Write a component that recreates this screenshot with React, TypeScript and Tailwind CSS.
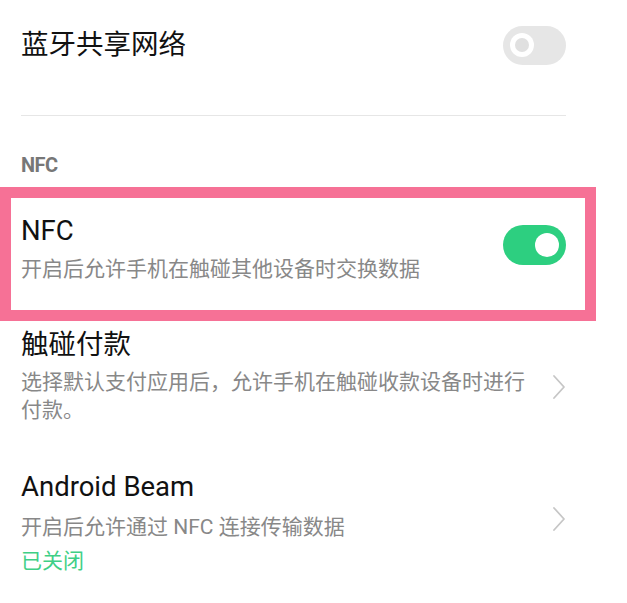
import React from 'react';

const font = { fontFamily: 'Roboto, "Noto Sans CJK SC", sans-serif' };

function Toggle({ on }: { on: boolean }) {
  if (on) {
    return (
      <div className="w-[63px] h-[40px] rounded-full bg-[#2dcf80] flex items-center justify-end pr-[7px]">
        <div className="w-[24px] h-[24px] rounded-full bg-white" />
      </div>
    );
  }
  return (
    <div className="w-[63px] h-[39px] rounded-full bg-[#e6e6e6] flex items-center pl-[7px]">
      <div className="w-[24px] h-[24px] rounded-full bg-white flex items-center justify-center">
        <div className="w-[14px] h-[14px] rounded-full bg-[#e0e0e0]" />
      </div>
    </div>
  );
}

function Chevron() {
  return (
    <svg width="14" height="26" viewBox="0 0 14 26" fill="none">
      <path d="M2 2 L12 13 L2 24" stroke="#c6c6c6" strokeWidth="1.8" strokeLinecap="round" strokeLinejoin="round" />
    </svg>
  );
}

export default function App() {
  return (
    <div className="w-[627px] h-[603px] bg-white overflow-hidden text-[#111]" style={font}>
      {/* Bluetooth tethering */}
      <div className="h-[90px] flex items-center justify-between pl-[21px] pr-[61px]">
        <span className="text-[27.5px] leading-[34px]">蓝牙共享网络</span>
        <Toggle on={false} />
      </div>

      <div className="mt-[25px] h-px bg-[#e6e6e6] ml-[21px] mr-[61px]" />

      <div className="mt-[37px] pl-[21px] text-[20px] leading-[24px] font-bold text-[#777] tracking-[-0.5px]">NFC</div>

      {/* highlighted NFC row */}
      <div className="mt-[10px] w-[596px] border-[11px] border-[#f67196]">
        <div className="h-[112px] flex justify-between pl-[10px] pr-[19px]">
          <div className="pt-[16px]">
            <div className="text-[27.5px] leading-[34px]">NFC</div>
            <div className="mt-[7px] text-[21px] leading-[28px] text-[#888]">开启后允许手机在触碰其他设备时交换数据</div>
          </div>
          <div className="mt-[27px]">
            <Toggle on />
          </div>
        </div>
      </div>

      {/* tap to pay */}
      <div className="flex justify-between pl-[21px] pr-[61px] pt-[7px]">
        <div className="w-[512px]">
          <div className="text-[27.5px] leading-[34px]">触碰付款</div>
          <div className="mt-[6px] text-[21px] leading-[28px] text-[#888]">
            选择默认支付应用后，允许手机在触碰收款设备时进行付款。
          </div>
        </div>
        <div className="mt-[46px]">
          <Chevron />
        </div>
      </div>

      {/* android beam */}
      <div className="flex justify-between pl-[21px] pr-[61px] mt-[46px]">
        <div>
          <div className="text-[27.5px] leading-[34px]">Android Beam</div>
          <div className="mt-[6px] text-[21px] leading-[34px] text-[#888]">开启后允许通过 NFC 连接传输数据</div>
          <div className="text-[21px] leading-[34px] text-[#3fcf86]">已关闭</div>
        </div>
        <div className="mt-[36px]">
          <Chevron />
        </div>
      </div>
    </div>
  );
}
